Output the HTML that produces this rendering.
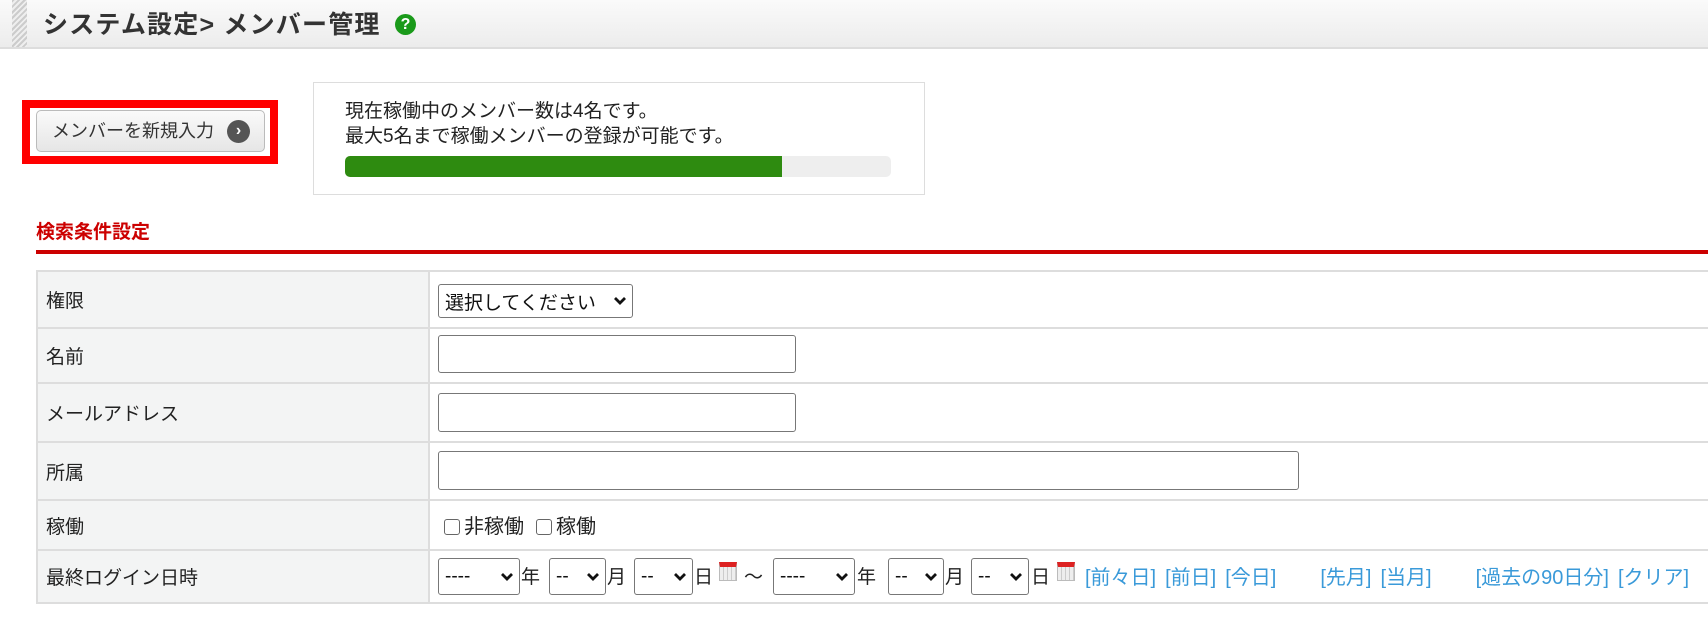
<!DOCTYPE html>
<html><head><meta charset="utf-8">
<style>
*{box-sizing:border-box;margin:0;padding:0}
body{width:1708px;height:619px;overflow:hidden;background:#fff;font-family:"Liberation Sans","Noto Sans CJK JP",sans-serif;color:#222;position:relative;font-size:19px}
.a{position:absolute}
.hdr{left:0;top:0;width:1708px;height:49px;background:linear-gradient(#fafafa,#ececec);border-bottom:2px solid #ddd}
.hatch{left:12px;top:0;width:15px;height:47px;background:repeating-linear-gradient(135deg,#ccc 0 2px,#eee 2px 4px)}
.title{left:43px;top:5px;font-size:25px;font-weight:bold;color:#333;letter-spacing:1.2px}
.help{left:395px;top:14px;width:21px;height:21px;border-radius:50%;background:#1a9a1a;color:#fff;font-weight:bold;font-size:16px;text-align:center;line-height:21px}
.redbox{left:22px;top:100px;width:256px;height:64px;border:8px solid #f00}
.btn{left:36px;top:110px;width:229px;height:42px;border:1px solid #bbb;border-radius:5px;background:linear-gradient(#fafafa,#e6e6e6);font-size:18px;color:#333;padding-left:15px;line-height:40px}
.arr{position:absolute;left:190px;top:9px;width:23px;height:23px;border-radius:50%;background:#555;color:#fff;font-size:16px;line-height:22px;text-align:center;font-weight:bold}
.info{left:313px;top:82px;width:612px;height:113px;border:1px solid #ddd}
.bar{left:345px;top:156px;width:546px;height:21px;background:#eee;border-radius:5px;overflow:hidden}
.bar div{width:437px;height:100%;background:#2e8b10}
.sec{left:36px;top:217px;font-weight:bold;color:#c00;font-size:19px}
.rl{left:36px;top:250px;width:1672px;height:4px;background:#c00}
.row{left:36px;width:1680px;border-top:2px solid #ddd;border-left:2px solid #ddd}
.lab{position:absolute;left:0;top:0;bottom:0;width:392px;background:#f3f4f4;border-right:2px solid #ddd;padding-left:8px;display:flex;align-items:center;font-size:19px}
.sel,.inp{position:absolute;border:1px solid #777;border-radius:3px;background:#fff;font-size:19px}
.sel{display:flex;align-items:center;padding-left:6px;color:#111}
.sel svg{position:absolute;right:6px;top:50%;margin-top:-4px}
.t{position:absolute;font-size:19px}
.lnk{color:#3a9ad9;font-size:20px}
.cb{display:inline-block;width:16px;height:16px;border:1px solid #666;border-radius:3px;vertical-align:-2px;margin-right:4px}
.cal{position:absolute;width:18px;height:19px;background:repeating-linear-gradient(90deg,#eee 0 3px,#ccc 3px 4px);border:1px solid #bbb;border-top:5px solid #d22}
</style></head><body>
<div class="a hdr"></div>
<div class="a hatch"></div>
<div class="a title">システム設定&gt; メンバー管理</div>
<div class="a help">?</div>
<div class="a redbox"></div>
<div class="a btn">メンバーを新規入力<span class="arr">›</span></div>
<div class="a info"></div>
<div class="a t" style="left:345px;top:96px">現在稼働中のメンバー数は4名です。</div>
<div class="a t" style="left:345px;top:121px">最大5名まで稼働メンバーの登録が可能です。</div>
<div class="a bar"><div></div></div>
<div class="a sec">検索条件設定</div>
<div class="a rl"></div>

<div class="a row" style="top:270px;height:57px"><div class="lab">権限</div></div>
<div class="a row" style="top:327px;height:55px"><div class="lab">名前</div></div>
<div class="a row" style="top:382px;height:59px"><div class="lab">メールアドレス</div></div>
<div class="a row" style="top:441px;height:58px"><div class="lab">所属</div></div>
<div class="a row" style="top:499px;height:50px"><div class="lab">稼働</div></div>
<div class="a row" style="top:549px;height:55px;border-bottom:2px solid #ddd"><div class="lab">最終ログイン日時</div></div>

<div class="sel" style="left:438px;top:284px;width:195px;height:34px">選択してください<svg width="12" height="8" viewBox="0 0 12 8"><path d="M1 1l5 5 5-5" fill="none" stroke="#111" stroke-width="2.8"/></svg></div>
<div class="inp" style="left:438px;top:335px;width:358px;height:38px"></div>
<div class="inp" style="left:438px;top:393px;width:358px;height:39px"></div>
<div class="inp" style="left:438px;top:451px;width:861px;height:39px"></div>
<div class="t" style="left:444px;top:510px;font-size:20px"><span class="cb"></span>非稼働<span class="cb" style="margin-left:12px"></span>稼働</div>

<div class="sel" style="left:438px;top:558px;width:82px;height:37px">----<svg width="12" height="8" viewBox="0 0 12 8"><path d="M1 1l5 5 5-5" fill="none" stroke="#111" stroke-width="2.8"/></svg></div>
<div class="t" style="left:521px;top:562px">年</div>
<div class="sel" style="left:549px;top:558px;width:57px;height:37px">--<svg width="12" height="8" viewBox="0 0 12 8"><path d="M1 1l5 5 5-5" fill="none" stroke="#111" stroke-width="2.8"/></svg></div>
<div class="t" style="left:607px;top:562px">月</div>
<div class="sel" style="left:634px;top:558px;width:59px;height:37px">--<svg width="12" height="8" viewBox="0 0 12 8"><path d="M1 1l5 5 5-5" fill="none" stroke="#111" stroke-width="2.8"/></svg></div>
<div class="t" style="left:694px;top:562px">日</div>
<div class="cal" style="left:719px;top:562px"></div>
<div class="t" style="left:744px;top:562px">～</div>
<div class="sel" style="left:773px;top:558px;width:82px;height:37px">----<svg width="12" height="8" viewBox="0 0 12 8"><path d="M1 1l5 5 5-5" fill="none" stroke="#111" stroke-width="2.8"/></svg></div>
<div class="t" style="left:857px;top:562px">年</div>
<div class="sel" style="left:888px;top:558px;width:56px;height:37px">--<svg width="12" height="8" viewBox="0 0 12 8"><path d="M1 1l5 5 5-5" fill="none" stroke="#111" stroke-width="2.8"/></svg></div>
<div class="t" style="left:945px;top:562px">月</div>
<div class="sel" style="left:971px;top:558px;width:58px;height:37px">--<svg width="12" height="8" viewBox="0 0 12 8"><path d="M1 1l5 5 5-5" fill="none" stroke="#111" stroke-width="2.8"/></svg></div>
<div class="t" style="left:1031px;top:562px">日</div>
<div class="cal" style="left:1057px;top:562px"></div>
<div class="t lnk" style="left:1085px;top:561px;white-space:nowrap">[前々日]<span style="margin-left:9px">[前日]</span><span style="margin-left:9px">[今日]</span><span style="margin-left:44px">[先月]</span><span style="margin-left:9px">[当月]</span><span style="margin-left:44px">[過去の90日分]</span><span style="margin-left:9px">[クリア]</span></div>
</body></html>
